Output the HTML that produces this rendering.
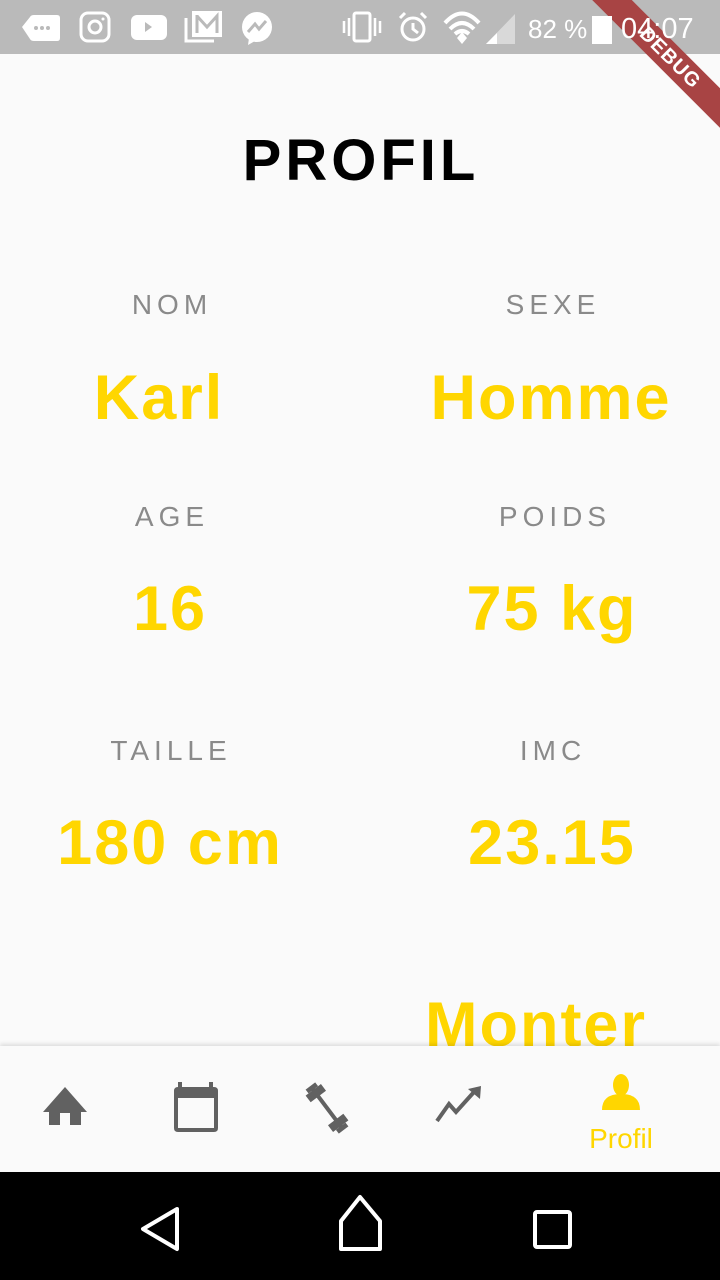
<!DOCTYPE html>
<html><head><meta charset="utf-8"><style>
*{margin:0;padding:0;box-sizing:border-box}
body{width:720px;height:1280px;background:#fafafa;position:relative;overflow:hidden;font-family:"Liberation Sans",sans-serif}
.t{position:absolute;line-height:1;white-space:nowrap;transform:translateX(-50%)}
.lbl{font-size:28px;color:#8a8a8a;letter-spacing:5px}
.val{font-size:63px;font-weight:bold;color:#ffd600;letter-spacing:2px}
</style></head><body>
<div style="position:absolute;left:0;top:0;width:720px;height:54px;background:#bababa"></div>
<div style="position:absolute;left:560px;top:44px;width:220px;height:28px;background:#a84444;transform:rotate(45deg);color:#fff;font-weight:bold;font-size:20px;text-align:center;line-height:28px;letter-spacing:1px">DEBUG</div>
<svg style="position:absolute;left:0;top:0" width="720" height="54">
<g fill="#fff" stroke="#fff">
<path d="M22 27 L30 17 Q31 15 34 15 H57 Q60 15 60 18 V38 Q60 41 57 41 H34 Q31 41 30 39 Z" stroke="none"/>
<circle cx="36" cy="28" r="2" fill="#bababa" stroke="none"/><circle cx="42" cy="28" r="2" fill="#bababa" stroke="none"/><circle cx="48" cy="28" r="2" fill="#bababa" stroke="none"/>
<rect x="81" y="13" width="28" height="28" rx="7" fill="none" stroke-width="3"/>
<circle cx="95" cy="27" r="6" fill="none" stroke-width="3"/>
<circle cx="103" cy="19" r="1.5" stroke="none"/>
<rect x="131" y="15" width="36" height="25" rx="6" stroke="none"/>
<path d="M145 22 L152 27 L145 32Z" fill="#bababa" stroke="none"/>
<path d="M186 18 V41 H214" fill="none" stroke-width="3"/>
<path d="M192 11 H222 V37 H192 Z" stroke="none"/>
<path d="M197 15 V33 M197 16 L207 27 L217 16 V33" fill="none" stroke="#bababa" stroke-width="3"/>
<circle cx="257" cy="27" r="15" stroke="none"/><path d="M249 38 L248 45 L255 41Z" stroke="none"/>
<path d="M248 32 L255 24 L259 29 L266 21" stroke="#bababa" stroke-width="3" fill="none"/>
<rect x="354" y="13" width="16" height="28" rx="2" fill="none" stroke-width="3"/>
<path d="M344 21 V33 M349 18 V36 M375 18 V36 M380 21 V33" stroke-width="2.5"/>
<circle cx="413" cy="29" r="11" fill="none" stroke-width="3"/><path d="M413 23 V29 L418 33 M400 18 L405 13 M426 18 L421 13" fill="none" stroke-width="3"/>
<path d="M445 23 Q462 4 479 23 M450 29 Q462 17 474 29 M455 34 Q462 28 469 34" fill="none" stroke-width="4"/>
<path d="M457 38 L462 32 L467 38 L462 44Z" stroke="none"/>
<path d="M486 44 L515 14 V44 Z" stroke="none" opacity=".45"/>
<path d="M486 44 L497 33 V44 Z" stroke="none"/>
<rect x="592" y="16" width="20" height="28" stroke="none"/>
</g>
<text x="528" y="38" font-family="Liberation Sans" font-size="26" fill="#fff">82 %</text>
<text x="621" y="38" font-family="Liberation Sans" font-size="29" fill="#fff">04:07</text>
</svg>

<div class="t" style="left:361px;top:132px;font-size:58px;font-weight:bold;letter-spacing:4px;color:#000">PROFIL</div>

<div class="t lbl" style="left:172px;top:291px">NOM</div>
<div class="t lbl" style="left:553px;top:291px">SEXE</div>
<div class="t val" style="left:159px;top:367px">Karl</div>
<div class="t val" style="left:551px;top:367px">Homme</div>

<div class="t lbl" style="left:172px;top:503px">AGE</div>
<div class="t lbl" style="left:555px;top:503px">POIDS</div>
<div class="t val" style="left:170px;top:578px">16</div>
<div class="t val" style="left:552px;top:578px">75 kg</div>

<div class="t lbl" style="left:171px;top:737px">TAILLE</div>
<div class="t lbl" style="left:553px;top:737px">IMC</div>
<div class="t val" style="left:170px;top:812px">180 cm</div>
<div class="t val" style="left:552px;top:812px">23.15</div>

<div class="t val" style="left:536px;top:994px">Monter</div>

<div style="position:absolute;left:0;top:1046px;width:720px;height:126px;background:#fafafa;box-shadow:0 -2px 4px rgba(0,0,0,.12)"></div>
<svg style="position:absolute;left:0;top:0" width="720" height="1172">
<g fill="#616161">
<path d="M65 1087 L43 1112 H49 V1125 H60 V1113 H70 V1125 H81 V1112 H87 Z"/>
<path d="M178 1087 V1082 H182 V1087 H209 V1082 H213 V1087 H214 Q218 1087 218 1091 V1128 Q218 1132 214 1132 H178 Q174 1132 174 1128 V1091 Q174 1087 178 1087 Z M178 1098 V1128 H214 V1098 Z"/>
<g transform="translate(327 1108) rotate(53) scale(1.2)">
<rect x="-20" y="-1.7" width="40" height="3.4"/>
<rect x="-19" y="-8" width="7" height="16"/>
<rect x="12" y="-8" width="7" height="16"/>
<rect x="-23" y="-5" width="4" height="10"/>
<rect x="19" y="-5" width="4" height="10"/>
</g>
</g>
<path d="M437 1121 L449 1104 L456 1112 L474 1092" fill="none" stroke="#616161" stroke-width="4"/>
<path d="M468 1089 L481 1086 L480 1099 Z" fill="#616161"/>
<g fill="#ffd600"><ellipse cx="621" cy="1085" rx="8" ry="11"/><path d="M602 1110 Q602 1094 621 1094 Q640 1094 640 1110 Z"/></g>
<text x="621" y="1148" text-anchor="middle" font-family="Liberation Sans" font-size="28" fill="#ffd600">Profil</text>
</svg>
<div style="position:absolute;left:0;top:1172px;width:720px;height:108px;background:#000"></div>
<svg style="position:absolute;left:0;top:1172px" width="720" height="108" fill="none" stroke="#fff" stroke-width="4" stroke-linejoin="round">
<path d="M177 37 L143 57 L177 77 Z"/>
<path d="M341 49 L360 25 L380 49 V77 H341 Z"/>
<rect x="535" y="40" width="35" height="35" rx="2"/>
</svg>
</body></html>
